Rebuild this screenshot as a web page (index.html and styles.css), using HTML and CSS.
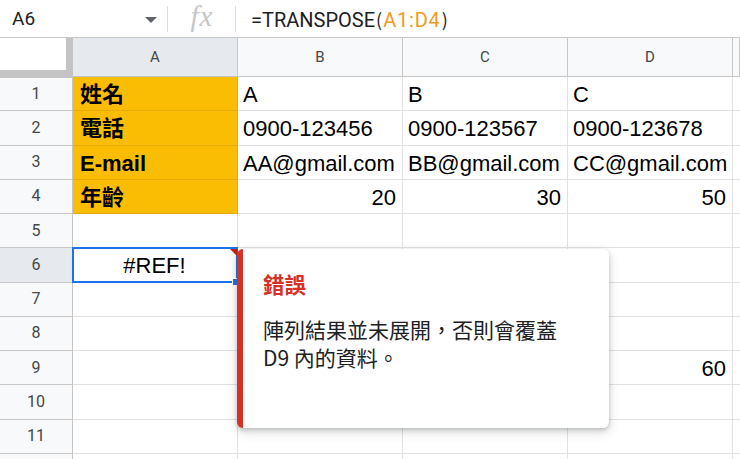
FILE: index.html
```html
<!DOCTYPE html>
<html lang="zh-Hant">
<head>
<meta charset="utf-8">
<title>TRANSPOSE #REF!</title>
<link rel="stylesheet" href="styles.css">
</head>
<body>
<div class="sheet">
  <div class="formula-bar">
    <div class="name-box">
      <span class="name">A6</span>
      <span class="caret"></span>
    </div>
    <div class="fx-box"><span class="fx">fx</span></div>
    <div class="formula">=TRANSPOSE<span class="paren">(</span><span class="ref">A1:D4</span><span class="paren">)</span></div>
  </div>

  <div class="grid">
    <div class="row head">
      <div class="corner"></div>
      <div class="ch sel">A</div>
      <div class="ch">B</div>
      <div class="ch">C</div>
      <div class="ch">D</div>
      <div class="ch"></div>
    </div>
    <div class="row">
      <div class="rh">1</div>
      <div class="c key">姓名</div>
      <div class="c">A</div>
      <div class="c">B</div>
      <div class="c">C</div>
      <div class="c"></div>
    </div>
    <div class="row">
      <div class="rh">2</div>
      <div class="c key">電話</div>
      <div class="c">0900-123456</div>
      <div class="c">0900-123567</div>
      <div class="c">0900-123678</div>
      <div class="c"></div>
    </div>
    <div class="row">
      <div class="rh">3</div>
      <div class="c key">E-mail</div>
      <div class="c">AA@gmail.com</div>
      <div class="c">BB@gmail.com</div>
      <div class="c">CC@gmail.com</div>
      <div class="c"></div>
    </div>
    <div class="row">
      <div class="rh">4</div>
      <div class="c key last">年齡</div>
      <div class="c num">20</div>
      <div class="c num">30</div>
      <div class="c num">50</div>
      <div class="c"></div>
    </div>
    <div class="row">
      <div class="rh">5</div>
      <div class="c"></div>
      <div class="c"></div>
      <div class="c"></div>
      <div class="c"></div>
      <div class="c"></div>
    </div>
    <div class="row">
      <div class="rh sel">6</div>
      <div class="c center active">#REF!<span class="err-mark"></span><span class="handle"></span></div>
      <div class="c"></div>
      <div class="c"></div>
      <div class="c"></div>
      <div class="c"></div>
    </div>
    <div class="row">
      <div class="rh">7</div>
      <div class="c"></div>
      <div class="c"></div>
      <div class="c"></div>
      <div class="c"></div>
      <div class="c"></div>
    </div>
    <div class="row">
      <div class="rh">8</div>
      <div class="c"></div>
      <div class="c"></div>
      <div class="c"></div>
      <div class="c"></div>
      <div class="c"></div>
    </div>
    <div class="row">
      <div class="rh">9</div>
      <div class="c"></div>
      <div class="c"></div>
      <div class="c"></div>
      <div class="c num">60</div>
      <div class="c"></div>
    </div>
    <div class="row">
      <div class="rh">10</div>
      <div class="c"></div>
      <div class="c"></div>
      <div class="c"></div>
      <div class="c"></div>
      <div class="c"></div>
    </div>
    <div class="row">
      <div class="rh">11</div>
      <div class="c"></div>
      <div class="c"></div>
      <div class="c"></div>
      <div class="c"></div>
      <div class="c"></div>
    </div>
    <div class="row">
      <div class="rh"></div>
      <div class="c"></div>
      <div class="c"></div>
      <div class="c"></div>
      <div class="c"></div>
      <div class="c"></div>
    </div>

    <div class="tooltip">
      <div class="tip-title">錯誤</div>
      <div class="tip-body">陣列結果並未展開，否則會覆蓋<br>D9 內的資料。</div>
    </div>
  </div>
</div>
</body>
</html>
```

FILE: styles.css
```css
* { box-sizing: border-box; }

html, body {
  margin: 0;
  padding: 0;
  background: #ffffff;
}

body {
  width: 740px;
  height: 459px;
  overflow: hidden;
  font-family: "Liberation Sans", Arial, "Noto Sans CJK TC", sans-serif;
  color: #000;
}

.sheet {
  width: 740px;
  height: 459px;
  overflow: hidden;
}

/* ---------- formula bar ---------- */
.formula-bar {
  display: flex;
  align-items: center;
  height: 38px;
  border-bottom: 1px solid #c7c7c7;
  background: #fff;
}

.name-box {
  width: 168px;
  height: 100%;
  display: flex;
  align-items: center;
  justify-content: space-between;
  padding: 0 11px 0 12px;
  position: relative;
}

.name-box::after,
.fx-box::after {
  content: "";
  position: absolute;
  right: 0;
  top: 6px;
  bottom: 5px;
  width: 1px;
  background: #dadce0;
}

.name {
  font-family: Roboto, "Liberation Sans", sans-serif;
  font-size: 19px;
  color: #202124;
  letter-spacing: 0.2px;
}

.caret {
  width: 0;
  height: 0;
  border-left: 6px solid transparent;
  border-right: 6px solid transparent;
  border-top: 6px solid #5f6368;
  margin-top: 2px;
}

.fx-box {
  width: 68px;
  height: 100%;
  display: flex;
  align-items: center;
  justify-content: center;
  position: relative;
}

.fx {
  font-family: "Liberation Serif", "DejaVu Serif", serif;
  font-style: italic;
  font-size: 29px;
  color: #c4c6c9;
  margin-top: -4px;
  letter-spacing: 1px;
}

.formula {
  padding-left: 15px;
  font-family: Roboto, "Liberation Sans", sans-serif;
  font-size: 20px;
  color: #202124;
  white-space: nowrap;
}

.paren {
  font-family: "Noto Sans CJK TC", sans-serif;
  font-size: 18px;
  padding: 0 1px;
}

.ref {
  color: #f09a24;
  letter-spacing: 0.8px;
}

/* ---------- grid ---------- */
.grid {
  position: relative;
}

.row {
  display: grid;
  grid-template-columns: 73px 165px 165px 165px 165px 1fr;
  grid-template-rows: 100%;
  height: 34.27px;
}

.row.head {
  height: 39px;
}

.corner {
  background: #fff;
  border-right: 7px solid #c4c4c4;
  border-bottom: 7px solid #c4c4c4;
  position: relative;
}

.corner::after {
  content: "";
  position: absolute;
  left: 0;
  right: -7px;
  bottom: -8px;
  height: 1px;
  background: #c4c4c4;
}

.ch {
  background: #f8f9fa;
  border-right: 1px solid #c7c7c7;
  border-bottom: 1px solid #c4c4c4;
  display: flex;
  align-items: center;
  justify-content: center;
  font-family: Roboto, "Liberation Sans", sans-serif;
  font-size: 15px;
  color: #444746;
}

.ch.sel {
  background: #e6e9ed;
}

.rh {
  background: #f8f9fa;
  border-right: 1px solid #c4c4c4;
  border-bottom: 1px solid #c7c7c7;
  display: flex;
  align-items: center;
  justify-content: center;
  font-family: Roboto, "Liberation Sans", sans-serif;
  font-size: 16px;
  line-height: 20px;
  color: #444746;
}

.rh.sel {
  background: #e6e9ed;
}

.c {
  min-height: 0;
  border-right: 1px solid #e1e1e1;
  border-bottom: 1px solid #e1e1e1;
  display: flex;
  align-items: center;
  padding: 3px 6px 0 5px;
  font-size: 22px;
  line-height: 24px;
  white-space: nowrap;
}

.c.key {
  background: #fbbc04;
  font-weight: bold;
  padding-left: 7px;
  border-right-color: #e6ad0a;
  border-bottom-color: #e6ad0a;
}

.c.num {
  justify-content: flex-end;
}

.c.center {
  justify-content: center;
}

.c.active {
  position: relative;
}

.c.active::before {
  content: "";
  position: absolute;
  left: -1px;
  top: -1px;
  right: -1px;
  bottom: -1px;
  border: 2.5px solid #1a73e8;
  pointer-events: none;
}

.err-mark {
  position: absolute;
  right: 0;
  top: 1px;
  width: 0;
  height: 0;
  border-top: 7px solid #b3261e;
  border-left: 7px solid transparent;
}

.handle {
  position: absolute;
  right: -2px;
  bottom: -4px;
  width: 7px;
  height: 8px;
  background: #1a73e8;
  border: 1px solid #fff;
}

/* ---------- tooltip ---------- */
.tooltip {
  position: absolute;
  left: 237px;
  top: 211px;
  width: 372px;
  height: 179px;
  background: #fff;
  border-left: 6px solid #d93025;
  border-radius: 6px;
  box-shadow: 0 2px 4px rgba(60, 64, 67, 0.25), 0 4px 12px rgba(60, 64, 67, 0.18);
  padding: 21px 20px 0 20px;
  font-family: "Noto Sans CJK TC", "Noto Sans", sans-serif;
  z-index: 5;
}

.tip-title {
  color: #d93025;
  font-weight: bold;
  font-size: 21.5px;
  line-height: 28px;
}

.tip-body {
  margin-top: 17px;
  color: #202124;
  font-size: 21px;
  line-height: 28px;
}
```
